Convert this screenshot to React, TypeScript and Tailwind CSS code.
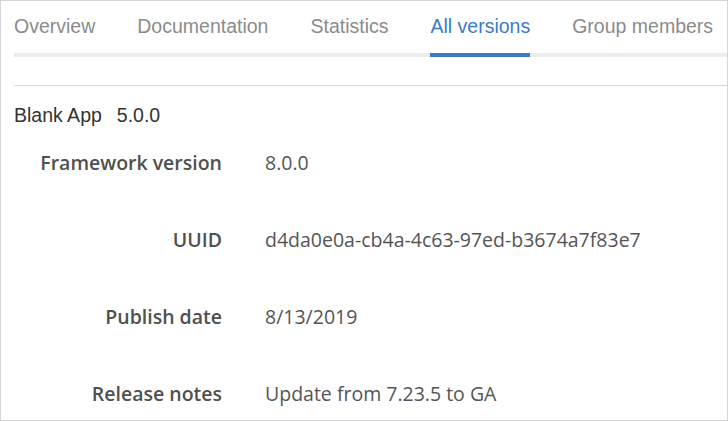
import React from "react";

const tabs = ["Overview", "Documentation", "Statistics", "All versions", "Group members"];

const rows: { label: string; value: string }[] = [
  { label: "Framework version", value: "8.0.0" },
  { label: "UUID", value: "d4da0e0a-cb4a-4c63-97ed-b3674a7f83e7" },
  { label: "Publish date", value: "8/13/2019" },
  { label: "Release notes", value: "Update from 7.23.5 to GA" },
];

export default function App() {
  const active = "All versions";

  return (
    <div className="h-[421px] w-[728px] overflow-hidden border border-[#d6d6d6] bg-white pl-[13px]">
      <nav className="flex items-start bg-[linear-gradient(to_top,#ececef_4px,transparent_4px)] font-['Liberation_Sans',Arial,sans-serif] text-[19.5px]">
        {tabs.map((t) => {
          const isActive = t === active;
          return (
            <button
              key={t}
              type="button"
              className={`mr-[42px] border-b-4 pt-[10px] pb-[12px] leading-[30px] whitespace-nowrap ${
                isActive ? "border-[#3b7bc8] text-[#3b7bc8]" : "border-transparent text-[#8b8b8b]"
              }`}
            >
              {t}
            </button>
          );
        })}
      </nav>

      <div className="mt-[28px] border-t border-[#d8d8d8]" />

      <div className="mt-[18px] flex gap-[15px] font-['Liberation_Sans',Arial,sans-serif] text-[19.5px] leading-[22px] text-[#333]">
        <span>Blank App</span>
        <span>5.0.0</span>
      </div>

      <div className="mt-[23px] font-['Open_Sans',sans-serif] text-[19.5px] leading-[28px]">
        {rows.map((r) => (
          <div key={r.label} className="flex h-[77px] items-start">
            <div className="w-[208px] text-right font-semibold text-[#505050]">{r.label}</div>
            <div className="ml-[43px] text-[#555]">{r.value}</div>
          </div>
        ))}
      </div>
    </div>
  );
}
